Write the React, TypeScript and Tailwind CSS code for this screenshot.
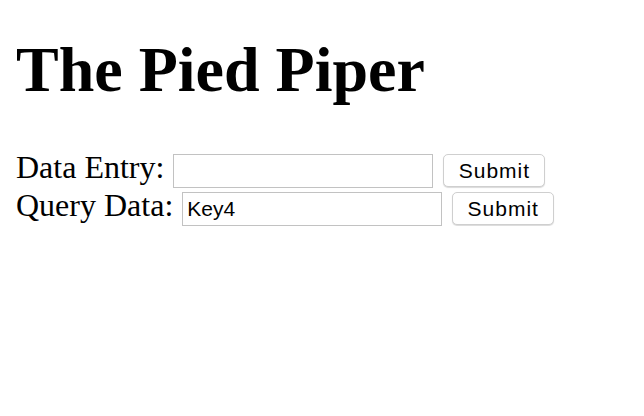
export default function App() {
  const rows = [
    { label: 'Data Entry:', value: '' },
    { label: 'Query Data:', value: 'Key4' },
  ];

  return (
    <div className="bg-white px-[16px] pt-[33px] text-black">
      <h1 className="mb-[44px] font-['Liberation_Serif',serif] text-[64px] font-bold leading-[normal]">
        The Pied Piper
      </h1>

      <div className="flex flex-col gap-[1px]">
        {rows.map((row) => (
          <div key={row.label} className="flex items-baseline">
            <span className="font-['Liberation_Serif',serif] text-[32px] leading-none">{row.label}</span>
            <input
              type="text"
              defaultValue={row.value}
              className="ml-[9px] h-[34px] w-[260px] border border-[#c2c2c2] bg-white px-[4px] font-['Liberation_Sans',sans-serif] text-[21px] text-black outline-none"
            />
            <button
              type="button"
              className="ml-[10px] h-[33px] w-[102px] rounded-[5px] border border-[#cfcfcf] bg-white font-['Liberation_Sans',sans-serif] text-[21px] tracking-[1px] text-black shadow-[0_1px_1px_rgba(0,0,0,0.15)]"
            >
              Submit
            </button>
          </div>
        ))}
      </div>
    </div>
  );
}
